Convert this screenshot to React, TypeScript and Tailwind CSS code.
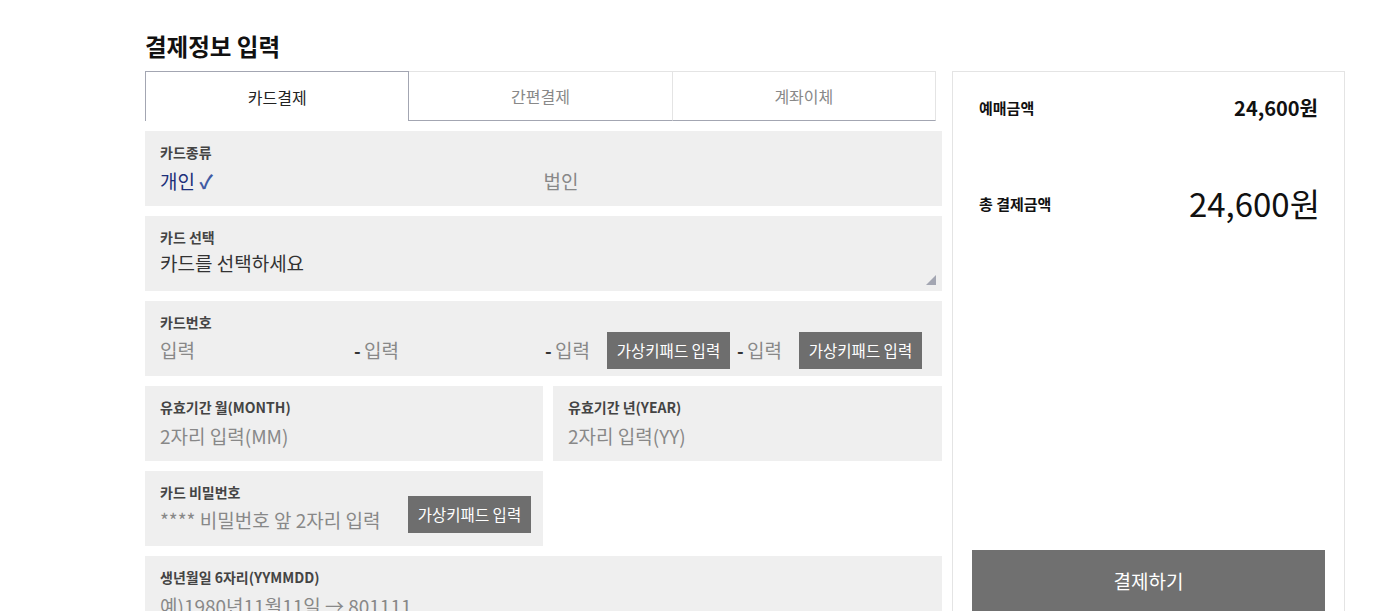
const font = "font-['Noto_Sans_CJK_KR','Noto_Sans',sans-serif]";

function Field({ label, children, className = '' }: { label: string; children: React.ReactNode; className?: string }) {
  return (
    <div className={`relative h-[75px] bg-[#efefef] px-[15px] pt-[11px] ${className}`}>
      <div className="text-[14px] font-bold leading-[20px] text-[#444]">{label}</div>
      <div className="mt-[5px] flex h-[28px] items-center text-[19px] leading-[28px]">{children}</div>
    </div>
  );
}

function KeypadButton({ className = '' }: { className?: string }) {
  return (
    <button
      className={`flex h-[37px] w-[123px] shrink-0 items-center justify-center bg-[#6e6e6e] text-[15.5px] text-white ${className}`}
    >
      가상키패드 입력
    </button>
  );
}

function Dash() {
  return <span className="inline-block w-[10px] text-[18px] font-bold text-[#333]">-</span>;
}

export default function App() {
  return (
    <div className={`h-[611px] w-[1382px] overflow-hidden bg-white ${font}`}>
      <div className="ml-[145px] pt-[29px]">
        <h2 className="h-[42px] text-[23.5px] font-bold leading-[34px] text-[#111]">결제정보 입력</h2>
        <div className="flex gap-[10px]">
          {/* left column */}
          <div className="w-[797px]">
            <div className="flex h-[50px] w-[791px]">
              <div className="flex flex-1 items-center justify-center border-x border-t border-[#a3a6b2] text-[16px] text-[#222]">
                카드결제
              </div>
              <div className="flex flex-1 items-center justify-center border-t border-r border-b border-t-[#e4e4e4] border-r-[#e4e4e4] border-b-[#a3a6b2] text-[16px] text-[#888]">
                간편결제
              </div>
              <div className="flex flex-1 items-center justify-center border-t border-r border-b border-t-[#e4e4e4] border-r-[#e4e4e4] border-b-[#a3a6b2] text-[16px] text-[#888]">
                계좌이체
              </div>
            </div>

            <div className="mt-[10px] flex flex-col gap-[10px]">
              <Field label="카드종류">
                <div className="grid w-full grid-cols-2">
                  <span className="text-[#1d2f7a]">
                    개인 <span className="font-bold text-[#3f5ba3]">✓</span>
                  </span>
                  <span className="text-[#888]">법인</span>
                </div>
              </Field>

              <Field label="카드 선택">
                <span className="-mt-[6px] text-[#333]">카드를 선택하세요</span>
                <svg className="absolute right-[6px] bottom-[6px]" width="10" height="10" viewBox="0 0 10 10">
                  <path d="M10 0 L10 10 L0 10 Z" fill="#a3a6b2" />
                </svg>
              </Field>

              <div className="relative h-[75px] bg-[#efefef] px-[15px] pt-[11px]">
                <div className="text-[14px] font-bold leading-[20px] text-[#444]">카드번호</div>
                <div className="flex h-[37px] items-center text-[19px] text-[#888]">
                  <span className="w-[194px]">입력</span>
                  <Dash />
                  <span className="w-[181px]">입력</span>
                  <Dash />
                  <span className="w-[52px]">입력</span>
                  <KeypadButton />
                  <span className="w-[7px]" />
                  <Dash />
                  <span className="w-[52px]">입력</span>
                  <KeypadButton />
                </div>
              </div>

              <div className="grid grid-cols-[398px_1fr] gap-[10px]">
                <Field label="유효기간 월(MONTH)">
                  <span className="text-[#888]">2자리 입력(MM)</span>
                </Field>
                <Field label="유효기간 년(YEAR)">
                  <span className="text-[#888]">2자리 입력(YY)</span>
                </Field>
              </div>

              <div className="grid grid-cols-[398px_1fr] gap-[10px]">
                <div className="relative h-[75px] bg-[#efefef] px-[15px] pt-[11px]">
                  <div className="text-[14px] font-bold leading-[20px] text-[#444]">카드 비밀번호</div>
                  <div className="flex h-[37px] items-center text-[19px] text-[#888]">
                    <span className="w-[248px] shrink-0">**** 비밀번호 앞 2자리 입력</span>
                    <KeypadButton className="-mt-[12px]" />
                  </div>
                </div>
                <div />
              </div>

              <Field label="생년월일 6자리(YYMMDD)">
                <span className="text-[#888]">예)1980년11월11일 → 801111</span>
              </Field>
            </div>
          </div>

          {/* right column */}
          <div className="h-[600px] w-[393px] border border-[#e4e4e4] px-[26px] pt-[22px]">
            <div className="flex h-[28px] items-center justify-between">
              <span className="text-[15px] font-bold text-[#111]">예매금액</span>
              <span className="text-[20px] font-bold text-[#111]">24,600원</span>
            </div>
            <div className="mt-[62px] flex h-[40px] items-center justify-between">
              <span className="text-[15px] font-bold text-[#111]">총 결제금액</span>
              <span className="-mr-[2px] text-[33px] text-[#111]">24,600원</span>
            </div>
            <button className="mt-[326px] -mx-[7px] flex h-[62px] w-[353px] items-center justify-center bg-[#707070] text-[19px] text-white">
              결제하기
            </button>
          </div>
        </div>
      </div>
    </div>
  );
}
